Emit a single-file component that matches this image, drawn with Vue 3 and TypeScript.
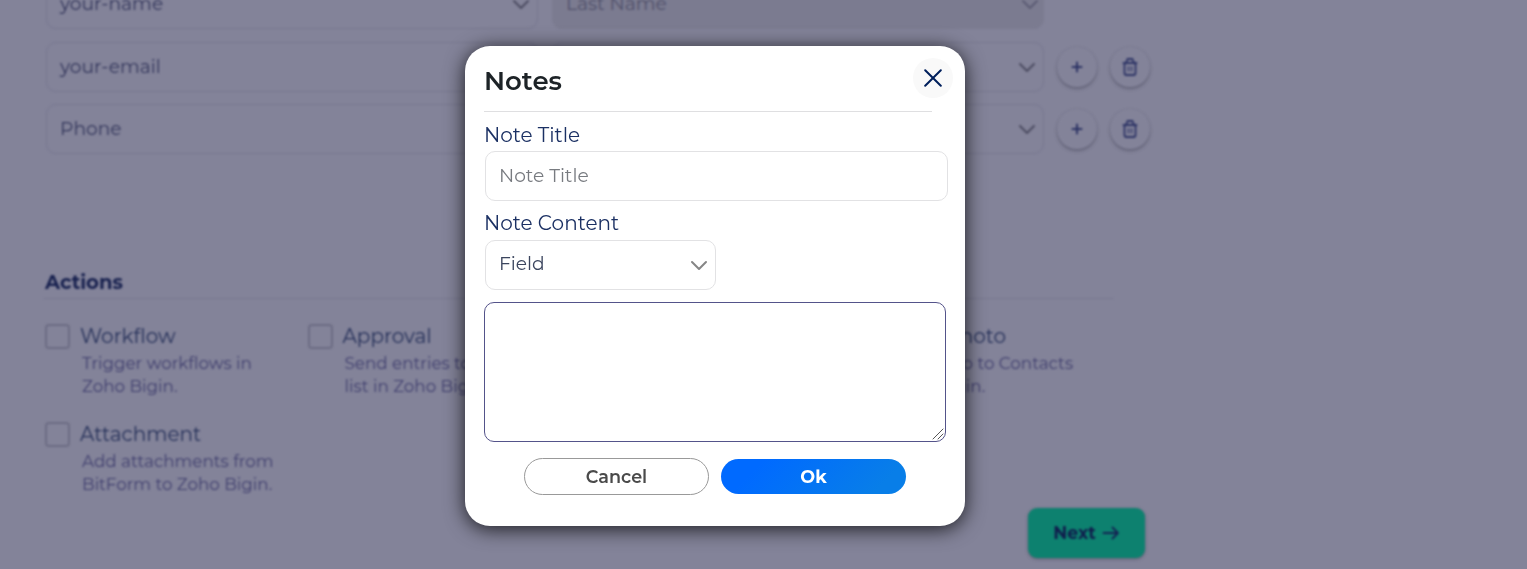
<script setup lang="ts">
interface Action { title: string; lines: string[]; key: string }

const rows = [
  { field: 'your-email', key: 'email' },
  { field: 'Phone', key: 'phone' },
]
const actions: Action[] = [
  { title: 'Workflow', lines: ['Trigger workflows in', 'Zoho Bigin.'], key: 'workflow' },
  { title: 'Approval', lines: ['Send entries to', 'list in Zoho Bigin.'], key: 'approval' },
  { title: 'Note', lines: ['Add note'], key: 'note' },
  { title: 'Upload Photo', lines: ['Add a photo to Contacts', 'in Zoho Bigin.'], key: 'photo' },
  { title: 'Attachment', lines: ['Add attachments from', 'BitForm to Zoho Bigin.'], key: 'attachment' },
]
</script>

<template>
  <div class="screen">
    <main class="page">
      <section class="map">
        <div class="map-row first">
          <div class="select half"><span>your-name</span>
            <svg class="chev" viewBox="0 0 18 12"><path d="M2 2l7 7 7-7" /></svg>
          </div>
          <div class="select half disabled"><span>Last Name</span>
            <svg class="chev" viewBox="0 0 18 12"><path d="M2 2l7 7 7-7" /></svg>
          </div>
        </div>
        <div v-for="r in rows" :key="r.key" class="map-row">
          <div class="select half"><span>{{ r.field }}</span></div>
          <div class="select half">
            <span></span>
            <svg class="chev" viewBox="0 0 18 12"><path d="M2 2l7 7 7-7" /></svg>
          </div>
          <div class="round"><svg class="plus" viewBox="0 0 14 14"><path d="M7 2.500v9M2.500 7h9" /></svg></div>
          <div class="round">
            <svg class="trash" viewBox="0 0 16 20">
              <path d="M1.500 6h13M2.500 6v10a2 2 0 0 0 2 2h7a2 2 0 0 0 2-2V6M4 6l1.500-4h5L12 6" />
              <path class="slots" d="M6.500 9.500v4.500M9.500 9.500v4.500" />
            </svg>
          </div>
        </div>
      </section>

      <h2 class="heading"><span>Actions</span></h2>
      <section class="actions">
        <div v-for="a in actions" :key="a.key" class="action">
          <i class="box"></i>
          <div>
            <div class="a-title">{{ a.title }}</div>
            <div v-for="l in a.lines" :key="l" class="a-line">{{ l }}</div>
          </div>
        </div>
      </section>

      <button class="next"><span>Next</span>
        <svg viewBox="0 0 18 14"><path d="M1.500 7h14.500M10.500 1.500L16 7l-5.500 5.500" /></svg>
      </button>
    </main>

    <div class="overlay">
      <div class="modal">
        <header>
          <h1>Notes</h1>
          <button class="close">
            <svg viewBox="0 0 18 18"><path d="M1.200 1.200l15.600 15.600M16.800 1.200L1.200 16.800" /></svg>
          </button>
        </header>
        <hr>
        <label class="label lb-title">Note Title</label>
        <input class="input" type="text" placeholder="Note Title">
        <label class="label lb-content">Note Content</label>
        <div class="select field"><span>Field</span>
          <svg class="chev" viewBox="0 0 18 12"><path d="M2 2l7 7 7-7" /></svg>
        </div>
        <div class="area">
          <textarea></textarea>
          <svg class="grip" viewBox="0 0 12 12"><path d="M1 11L11 1M6 11l5-5" /></svg>
        </div>
        <footer>
          <button class="btn cancel">Cancel</button>
          <button class="btn ok">Ok</button>
        </footer>
      </div>
    </div>
  </div>
</template>

<style>
body { background: #838399; overflow: hidden; }
</style>

<style scoped>
* { box-sizing: border-box; }
.screen {
  position: relative;
  width: 1527px;
  height: 569px;
  overflow: hidden;
  background: #838399;
  font-family: Montserrat, Inter, "Open Sans", sans-serif;
}
button { font-family: inherit; padding: 0; border: 0; }
svg { fill: none; stroke-linecap: round; stroke-linejoin: round; flex: none; display: block; }
.page { width: 1200px; height: 569px; filter: blur(1px); display: flex; flex-direction: column; }

.map { padding-left: 46px; margin-top: -21px; display: flex; flex-direction: column; gap: 12px; }
.map-row { display: flex; align-items: center; gap: 14px; }
.map-row.first { margin-bottom: 1px; }
.select {
  display: flex;
  align-items: center;
  justify-content: space-between;
  height: 50px;
  border: 1px solid #777790;
  border-radius: 10px;
  padding: 0 7px 2px 13px;
  font-size: 18.667px;
  color: #34375c;
  white-space: nowrap;
}
.half { width: 492px; }
.map-row .select { padding-bottom: 1px; }
.map-row .disabled { background: #7b7b90; border-color: #7b7b90; color: #50506a; padding-right: 4px; }
.chev { width: 18px; height: 12px; stroke: #4c4c62; stroke-width: 2; margin-top: 3px; }
.disabled .chev { stroke: #5c5c74; }
.round {
  width: 40px;
  height: 40px;
  border-radius: 50%;
  display: flex;
  align-items: center;
  justify-content: center;
  box-shadow: 0 2px 3px rgba(50, 50, 70, .38), 0 0 2px rgba(50, 50, 70, .15);
  background: #838399;
  margin-left: -1px;
}
.plus { width: 14px; height: 14px; stroke: #2b3264; stroke-width: 2; }
.trash { width: 16px; height: 20px; margin-right: 1px; stroke: #2b3264; stroke-width: 1.8; }
.slots { stroke-width: 1.2; }

.heading {
  margin: 114px 0 0 44px;
  width: 1069px;
  height: 31px;
  border-bottom: 1px solid #777790;
  padding-left: 1px;
  font-size: 19.600px;
  line-height: 28px;
  font-weight: 700;
  color: #18214f;
}
.actions {
  margin: 25px 0 0 45px;
  display: grid;
  grid-template-columns: repeat(4, 262.5px);
  grid-auto-rows: 98px;
}
.action { display: flex; gap: 10px; white-space: nowrap; }
.box { width: 25px; height: 25px; border: 2px solid #6c6c84; border-radius: 4px; flex: none; }
.a-title { font-size: 20px; line-height: 25px; color: #253059; margin-bottom: 3px; }
.a-line { font-size: 16.780px; line-height: 23px; color: #403f6e; padding-left: 2px; }
.next {
  position: absolute;
  left: 1028px;
  top: 508px;
  width: 117px;
  height: 50px;
  border-radius: 9px;
  background: #0d816f;
  box-shadow: 0 1px 3px rgba(50, 50, 70, .5);
  color: #101d4c;
  font-size: 17.300px;
  font-weight: 700;
  display: flex;
  align-items: center;
  justify-content: center;
  gap: 6px;
  padding-bottom: 1px;
}
.next svg { width: 18px; height: 14px; stroke: #142252; stroke-width: 1.800; }

.overlay { position: absolute; inset: 0; }
.modal {
  width: 500px;
  height: 480px;
  margin: 46px 0 0 465px;
  background: #fff;
  border-radius: 25px;
  box-shadow: 0 3px 20px rgba(0, 0, 0, .8);
  padding: 12px 17px 0 19px;
  display: flex;
  flex-direction: column;
}
header { display: flex; justify-content: space-between; height: 53px; margin-right: -5px; }
h1 { margin: 7px 0 0; font-size: 26px; line-height: 32px; font-weight: 600; color: #1d2327; }
.close {
  width: 40px;
  height: 40px;
  border-radius: 50%;
  background: #f9f9f9;
  display: flex;
  align-items: center;
  justify-content: center;
}
.close svg { width: 18px; height: 18px; stroke: #001f5c; stroke-width: 2; }
hr { width: 448px; height: 1px; margin: 0; border: 0; background: #dfdfe1; flex: none; }
.label { font-size: 20px; line-height: 24px; height: 24px; font-weight: 400; color: #1b3063; }
.lb-title { margin-top: 11px; }
.lb-content { margin-top: 10px; }
.input {
  width: 463px;
  height: 50px;
  margin: 4px 0 0 1px;
  border: 1px solid #e2e2e4;
  border-radius: 10px;
  padding: 0 13px 2px;
  font: 400 18.667px Montserrat, Inter, sans-serif;
  background: #fff;
  outline: 0;
}
.input::placeholder { color: #787b80; opacity: 1; }
.field { width: 231px; margin: 5px 0 0 1px; border-color: #e2e2e4; color: #3b455e; padding-bottom: 3px; }
.field .chev { stroke: #868686; margin-top: 4px; }
.area { position: relative; width: 462px; height: 140px; margin-top: 12px; flex: none; }
textarea {
  display: block;
  width: 100%;
  height: 100%;
  border: 1px solid #54538a;
  border-radius: 10px;
  background: #fff;
  outline: 0;
  resize: none;
}
.grip { position: absolute; right: 2px; bottom: 2px; width: 12px; height: 12px; stroke: #555; stroke-width: 1; }
footer { display: flex; gap: 12px; margin: 16px 0 0 40px; align-items: center; }
.btn { width: 185px; height: 35px; border-radius: 19px; font-size: 17.600px; font-weight: 600; }
.cancel { height: 37px; background: #fff; border: 1px solid #999; color: #4a4a4a; }
.ok { background: linear-gradient(135deg, #006aff 20%, #087ee8 85%); color: #fff; font-weight: 700; }
</style>
